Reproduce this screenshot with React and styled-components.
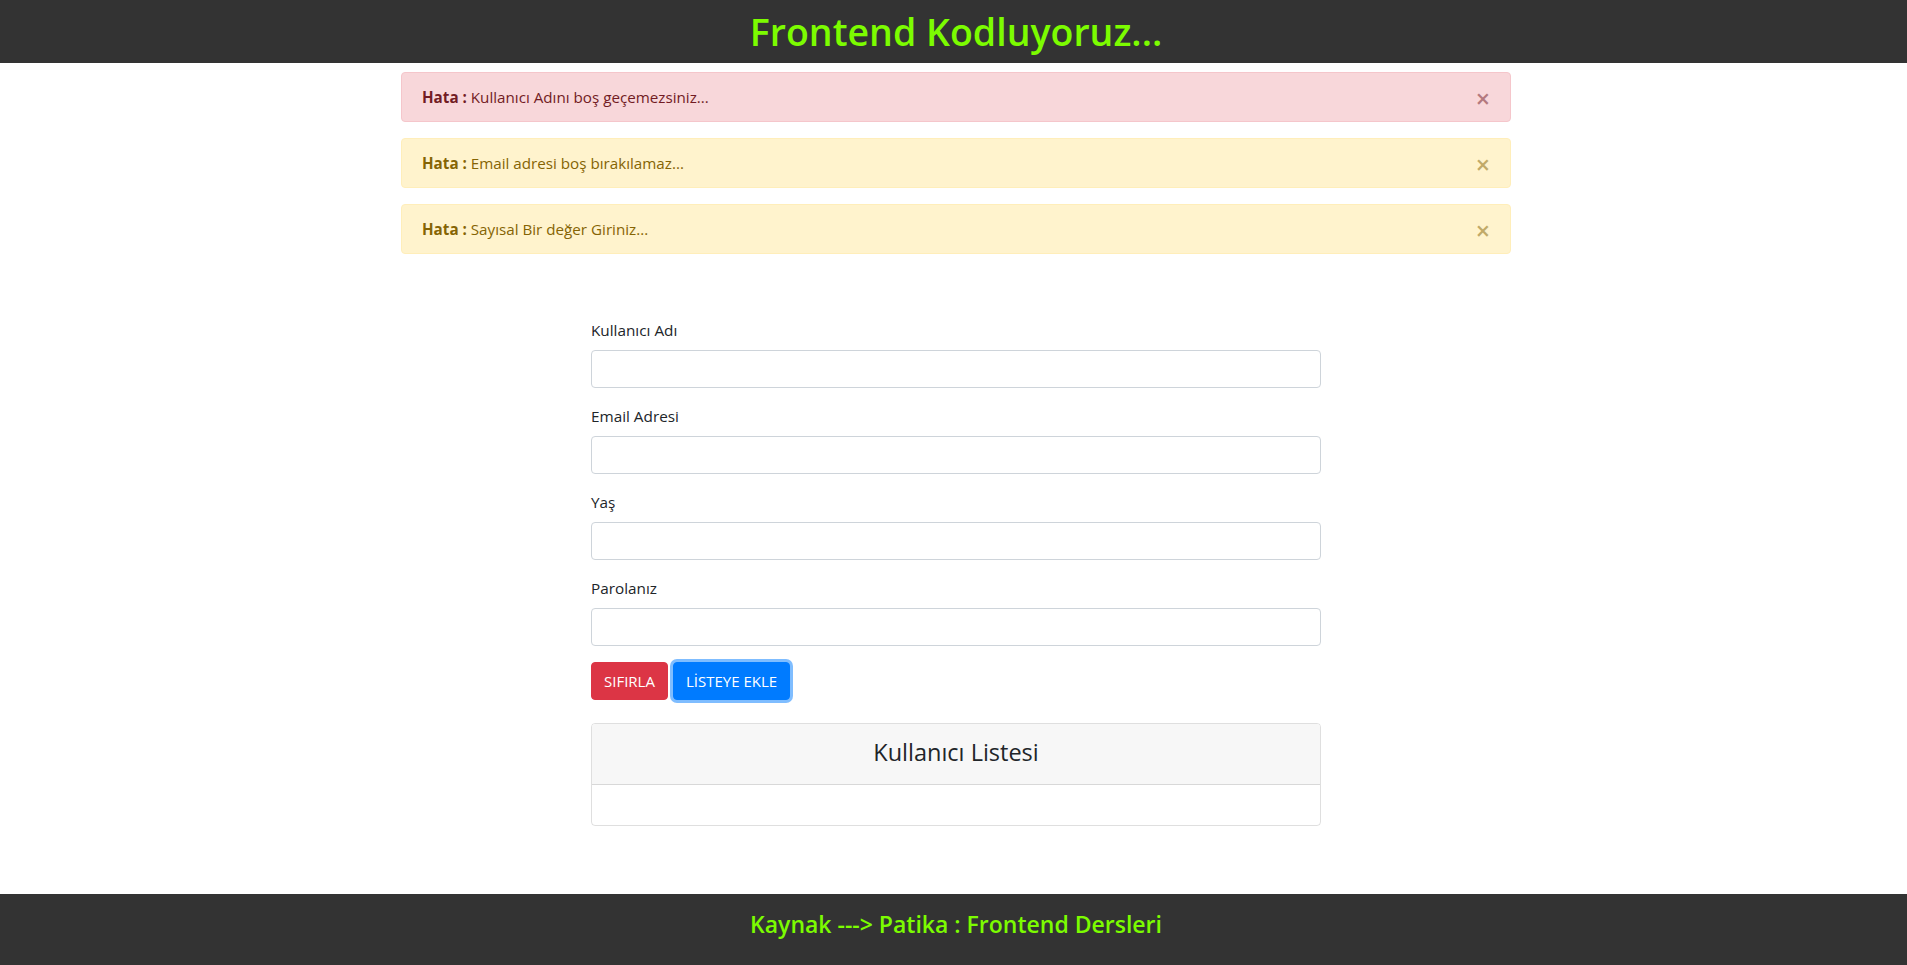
import React from "react";
import styled, { createGlobalStyle } from "styled-components";

const GlobalStyle = createGlobalStyle`
  * { box-sizing: border-box; }
  body {
    margin: 0;
    font-family: "Open Sans", "Noto Sans", sans-serif;
    font-size: 16px;
    line-height: 1.5;
    color: #212529;
    background: #fff;
  }
`;

const Page = styled.div`
  min-height: 100vh;
  display: flex;
  flex-direction: column;
`;

const Header = styled.header`
  height: 63px;
  background: #333;
  display: flex;
  justify-content: center;
  align-items: center;
  padding-left: 5px;
`;

const Title = styled.h1`
  margin: 0;
  color: #7cfc00;
  font-size: 37.5px;
  font-weight: 600;
  line-height: 1.2;
`;

const Main = styled.main`
  flex: 1;
  padding: 9px 0 0 5px;
`;

const AlertList = styled.div`
  width: 1110px;
  margin: 0 auto;
  display: flex;
  flex-direction: column;
  gap: 16px;
`;

const variants = {
  danger: { bg: "#f8d7da", border: "#f5c6cb", color: "#721c24" },
  warning: { bg: "#fff3cd", border: "#ffeeba", color: "#856404" },
};

const AlertBox = styled.div`
  position: relative;
  padding: 12px 20px;
  border: 1px solid ${(p) => variants[p.$type].border};
  border-radius: 4px;
  background: ${(p) => variants[p.$type].bg};
  color: ${(p) => variants[p.$type].color};
  font-size: 15.2px;
  line-height: 24px;
`;

const CloseButton = styled.button`
  position: absolute;
  top: 0;
  right: 0;
  padding: 12px 20px;
  height: 48px;
  background: transparent;
  border: 0;
  color: inherit;
  opacity: 0.5;
  font-family: inherit;
  font-size: 25px;
  font-weight: 600;
  line-height: 26px;
  cursor: pointer;
`;

const FormWrap = styled.form`
  width: 730px;
  margin: 0 auto;
  padding-top: 64px;
`;

const FormGroup = styled.div`
  margin-bottom: 16px;
`;

const Label = styled.label`
  display: block;
  margin-bottom: 8px;
  font-size: 15.3px;
  line-height: 24px;
`;

const Input = styled.input`
  display: block;
  width: 100%;
  height: 38px;
  padding: 6px 12px;
  border: 1px solid #ced4da;
  border-radius: 4px;
  font-family: inherit;
  font-size: 16px;
  color: #495057;
  outline: none;
`;

const ButtonRow = styled.div`
  display: flex;
  gap: 5px;
`;

const Button = styled.button`
  height: 38px;
  padding: 6px 12px;
  border: 1px solid ${(p) => p.$color};
  border-radius: 4px;
  background: ${(p) => p.$color};
  color: #fff;
  font-family: inherit;
  font-size: 15px;
  line-height: 24px;
  cursor: pointer;
  box-shadow: ${(p) => (p.$focused ? "0 0 0 3px rgba(0, 123, 255, 0.5)" : "none")};
`;

const Card = styled.div`
  margin-top: 23px;
  border: 1px solid rgba(0, 0, 0, 0.125);
  border-radius: 4px;
  overflow: hidden;
`;

const CardHeader = styled.div`
  padding: 11px 20px 15px;
  background: #f7f7f7;
  border-bottom: 1px solid rgba(0, 0, 0, 0.125);
`;

const CardTitle = styled.h3`
  margin: 0;
  text-align: center;
  font-size: 23.5px;
  font-weight: 500;
  line-height: 34px;
`;

const CardBody = styled.div`
  height: 40px;
`;

const Footer = styled.footer`
  height: 71px;
  background: #333;
  display: flex;
  justify-content: center;
  align-items: center;
  padding: 0 0 9px 5px;
`;

const FooterText = styled.h4`
  margin: 0;
  color: #7cfc00;
  font-size: 23px;
  font-weight: 600;
  line-height: 1.2;
`;

const Alert = ({ type, message }) => (
  <AlertBox $type={type}>
    <strong>Hata :</strong> {message}
    <CloseButton type="button">×</CloseButton>
  </AlertBox>
);

const alerts = [
  { type: "danger", message: "Kullanıcı Adını boş geçemezsiniz..." },
  { type: "warning", message: "Email adresi boş bırakılamaz..." },
  { type: "warning", message: "Sayısal Bir değer Giriniz..." },
];

const fields = [
  { label: "Kullanıcı Adı", type: "text" },
  { label: "Email Adresi", type: "text" },
  { label: "Yaş", type: "text" },
  { label: "Parolanız", type: "password" },
];

export default function App() {
  return (
    <Page>
      <GlobalStyle />
      <Header>
        <Title>Frontend Kodluyoruz...</Title>
      </Header>
      <Main>
        <AlertList>
          {alerts.map((a, i) => (
            <Alert key={i} type={a.type} message={a.message} />
          ))}
        </AlertList>
        <FormWrap onSubmit={(e) => e.preventDefault()}>
          {fields.map((f) => (
            <FormGroup key={f.label}>
              <Label>{f.label}</Label>
              <Input type={f.type} />
            </FormGroup>
          ))}
          <ButtonRow>
            <Button type="button" $color="#dc3545">SIFIRLA</Button>
            <Button type="submit" $color="#007bff" $focused>
              LİSTEYE EKLE
            </Button>
          </ButtonRow>
          <Card>
            <CardHeader>
              <CardTitle>Kullanıcı Listesi</CardTitle>
            </CardHeader>
            <CardBody />
          </Card>
        </FormWrap>
      </Main>
      <Footer>
        <FooterText>Kaynak ---&gt; Patika : Frontend Dersleri</FooterText>
      </Footer>
    </Page>
  );
}
